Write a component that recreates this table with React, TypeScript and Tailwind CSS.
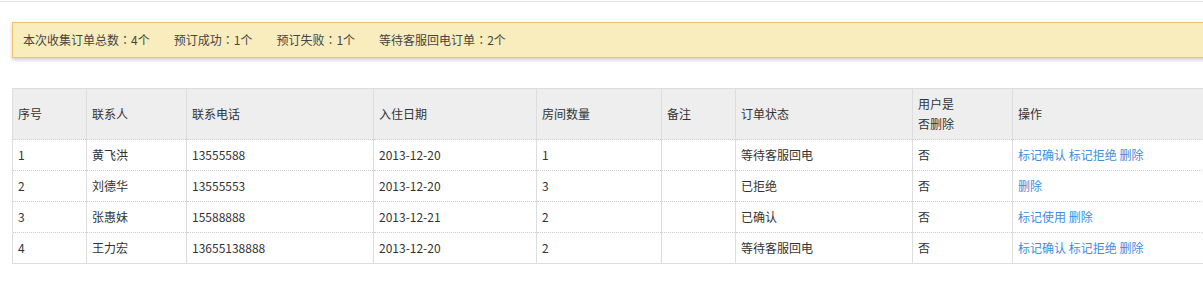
import React from "react";

const rows = [
  { id: "1", name: "黄飞洪", phone: "13555588", date: "2013-12-20", rooms: "1", note: "", status: "等待客服回电", del: "否", ops: ["标记确认", "标记拒绝", "删除"] },
  { id: "2", name: "刘德华", phone: "13555553", date: "2013-12-20", rooms: "3", note: "", status: "已拒绝", del: "否", ops: ["删除"] },
  { id: "3", name: "张惠妹", phone: "15588888", date: "2013-12-21", rooms: "2", note: "", status: "已确认", del: "否", ops: ["标记使用", "删除"] },
  { id: "4", name: "王力宏", phone: "13655138888", date: "2013-12-20", rooms: "2", note: "", status: "等待客服回电", del: "否", ops: ["标记确认", "标记拒绝", "删除"] },
];

const widths = [74, 100, 187, 163, 125, 74, 177, 100, 208];

function Stat({ label, value }: { label: string; value: string }) {
  return (
    <span>
      {label}
      <span style={{ fontFamily: '"Noto Sans CJK TC", sans-serif' }}>：</span>
      {value}
    </span>
  );
}

export default function App() {
  const font = { fontFamily: '"Noto Sans CJK SC", "Noto Sans", sans-serif' };
  return (
    <div className="w-[1203px] h-[286px] overflow-hidden bg-white text-[12px] text-[#333]" style={font}>
      <div className="h-[2px] border-b border-[#e2e2e2]" />
      <div className="ml-[12px] mt-[20px] w-[1220px] h-[36px] flex items-center gap-[24px] pl-[10px] bg-[#f9edbe] border border-[#f0c36d] shadow-[0_2px_4px_rgba(0,0,0,0.2)] text-[#444] leading-[20px]">
        <Stat label="本次收集订单总数" value="4个" />
        <Stat label="预订成功" value="1个" />
        <Stat label="预订失败" value="1个" />
        <Stat label="等待客服回电订单" value="2个" />
      </div>
      <table className="ml-[12px] mt-[30px] table-fixed border-collapse border border-[#ddd] w-[1208px] leading-[20px]">
        <colgroup>
          {widths.map((w, i) => (
            <col key={i} style={{ width: w }} />
          ))}
        </colgroup>
        <thead>
          <tr className="bg-[#eee] text-left">
            {["序号", "联系人", "联系电话", "入住日期", "房间数量", "备注", "订单状态"].map((h) => (
              <th key={h} className="font-normal px-[5px] py-[5px] border-x border-[#ddd] align-middle">{h}</th>
            ))}
            <th className="font-normal px-[5px] py-[5px] border-x border-[#ddd] align-middle">
              用户是
              <br />
              否删除
            </th>
            <th className="font-normal px-[5px] py-[5px] border-x border-[#ddd] align-middle">操作</th>
          </tr>
        </thead>
        <tbody>
          {rows.map((r) => (
            <tr key={r.id} className="border-t border-dotted border-[#ccc]">
              {[r.id, r.name, r.phone, r.date, r.rooms, r.note, r.status, r.del].map((c, i) => (
                <td key={i} className="px-[5px] py-[5px] border-x border-solid border-[#ddd]">{c}</td>
              ))}
              <td className="px-[5px] py-[5px] border-x border-solid border-[#ddd] text-[#3c8dde]">
                {r.ops.map((o, i) => (
                  <React.Fragment key={o}>
                    {i > 0 ? " " : ""}
                    <a href="#" className="text-[#3c8dde]">{o}</a>
                  </React.Fragment>
                ))}
              </td>
            </tr>
          ))}
        </tbody>
      </table>
    </div>
  );
}
